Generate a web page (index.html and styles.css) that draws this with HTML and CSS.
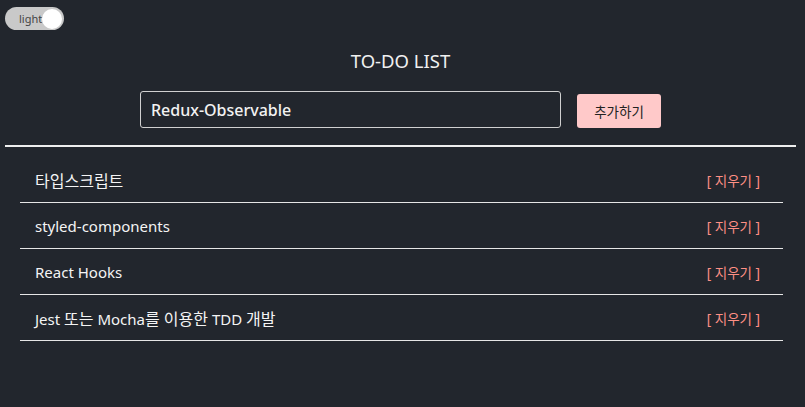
FILE: index.html
```html
<!DOCTYPE html>
<html lang="ko">
<head>
<meta charset="utf-8">
<title>TO-DO LIST</title>
<link rel="stylesheet" href="styles.css">
</head>
<body>
<div class="app">
  <div class="toggle-row">
    <div class="toggle"><span class="toggle-label">light</span><span class="knob"></span></div>
  </div>
  <h1 class="title">TO-DO LIST</h1>
  <div class="form">
    <div class="input">Redux-Observable</div>
    <button class="add">추가하기</button>
  </div>
  <div class="divider"></div>
  <ul class="list">
    <li class="item"><span class="text"><span class="ko">타입스크립트</span></span><span class="remove">[ 지우기 ]</span></li>
    <li class="item"><span class="text">styled-components</span><span class="remove">[ 지우기 ]</span></li>
    <li class="item"><span class="text">React Hooks</span><span class="remove">[ 지우기 ]</span></li>
    <li class="item"><span class="text">Jest <span class="ko">또는</span> Mocha<span class="ko">를 이용한</span> TDD <span class="ko">개발</span></span><span class="remove">[ 지우기 ]</span></li>
  </ul>
</div>
</body>
</html>
```
FILE: styles.css
```css
html, body {
  margin: 0;
  padding: 0;
  background: #22262d;
  height: 100%;
}
body {
  font-family: "Noto Sans", "Noto Sans CJK KR", sans-serif;
  color: #f0f0f0;
}
.app {
  padding: 7px 9px 0 5px;
}
.toggle-row {
  display: flex;
}
.toggle {
  width: 59px;
  height: 23px;
  border-radius: 12px;
  background: #c9c9c9;
  display: flex;
  align-items: center;
  justify-content: space-between;
  padding: 0 2px 0 14px;
  box-sizing: border-box;
}
.toggle-label {
  font-size: 11px;
  color: #444;
  line-height: 1;
}
.knob {
  width: 20px;
  height: 20px;
  border-radius: 50%;
  background: #fff;
}
.title {
  margin: 19px 0 0;
  text-align: center;
  font-size: 18.5px;
  font-weight: 400;
  line-height: 24px;
  color: #f0f0f0;
}
.form {
  display: flex;
  justify-content: center;
  align-items: center;
  gap: 16px;
  margin-top: 18px;
}
.input {
  width: 421px;
  height: 37px;
  box-sizing: border-box;
  border: 1px solid #d0d0d0;
  border-radius: 3px;
  padding: 0 10px;
  display: flex;
  align-items: center;
  font-size: 16px;
  font-weight: 500;
  color: #f2f2f2;
}
.add {
  width: 84px;
  height: 34px;
  margin-top: 3px;
  border: none;
  border-radius: 3px;
  background: #ffc9c9;
  color: #222;
  font-family: "Noto Sans CJK KR", sans-serif;
  font-size: 13.5px;
  padding: 0;
}
.divider {
  height: 2px;
  background: #eeeeee;
  margin-top: 17px;
}
.list {
  list-style: none;
  margin: 10px 13px 0 15px;
  padding: 0;
}
.item {
  height: 46px;
  box-sizing: border-box;
  border-bottom: 1px solid #e6e6e6;
  display: flex;
  align-items: center;
  justify-content: space-between;
  padding: 0 23px 0 15px;
}
.text {
  font-size: 15px;
  font-weight: 400;
  color: #f4f4f4;
}
.ko {
  font-size: 16px;
}
.remove {
  font-size: 13.5px;
  color: #ff8f85;
}
```
